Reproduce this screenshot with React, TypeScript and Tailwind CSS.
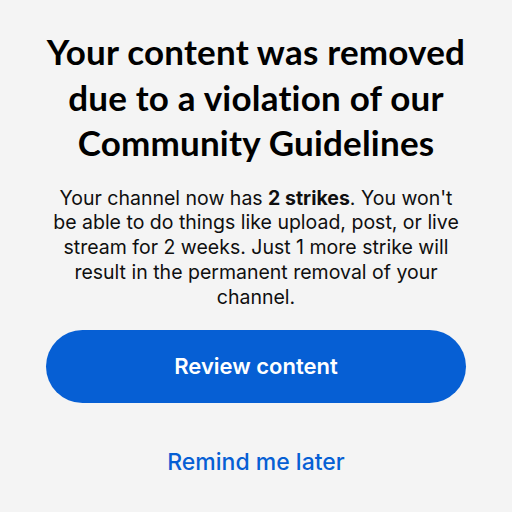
import React from 'react';

const App: React.FC = () => {
  return (
    <div className="w-[512px] h-[512px] bg-[#f4f4f4] flex flex-col items-center pt-[29px]">
      <h1 className="text-center whitespace-nowrap text-[35px] leading-[45.5px] font-bold text-black tracking-[0.2px] [font-family:Lato,sans-serif]">
        Your content was removed
        <br />
        due to a violation of our
        <br />
        Community Guidelines
      </h1>
      <p className="mt-[20px] text-center whitespace-nowrap text-[19.5px] leading-[24.8px] text-[#0f0f0f] [font-family:Inter,sans-serif]">
        Your channel now has <span className="font-bold">2 strikes</span>. You won't
        <br />
        be able to do things like upload, post, or live
        <br />
        stream for 2 weeks. Just 1 more strike will
        <br />
        result in the permanent removal of your
        <br />
        channel.
      </p>
      <button className="mt-[21px] w-[420px] h-[73px] shrink-0 rounded-full bg-[#065fd4] text-white text-[22px] font-semibold [font-family:Inter,sans-serif]">
        Review content
      </button>
      <button className="mt-[42px] text-[#065fd4] text-[23px] font-medium [font-family:Inter,sans-serif]">
        Remind me later
      </button>
    </div>
  );
};

export default App;
